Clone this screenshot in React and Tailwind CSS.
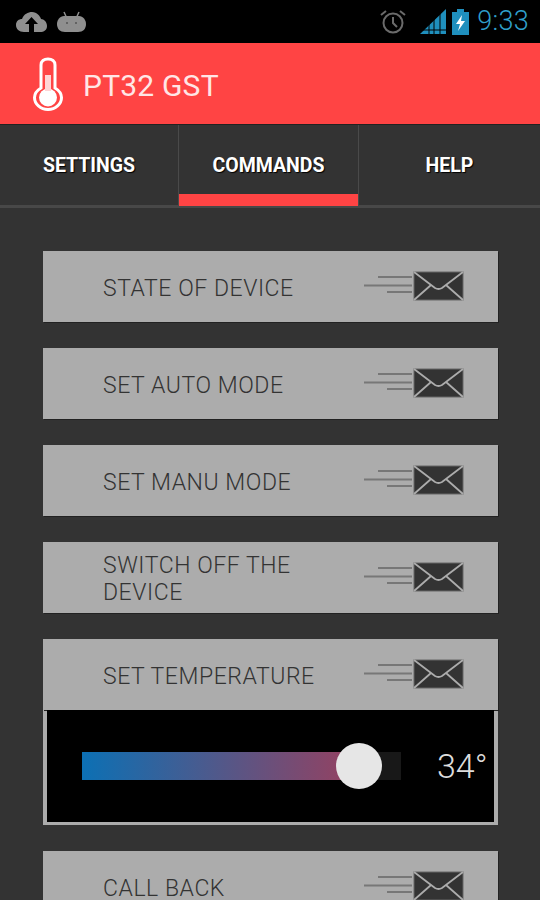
const COMMANDS = ['STATE OF DEVICE', 'SET AUTO MODE', 'SET MANU MODE', 'SWITCH OFF THE DEVICE'];

function SendIcon() {
  return (
    <svg width="100" height="32" viewBox="0 0 100 32" className="mb-[2px] shrink-0">
      <path d="M14 7H48M0 15.500H48M23 22H48" stroke="#777777" strokeWidth="1.800" fill="none" />
      <rect x="50" y="2" width="49" height="28" fill="#333333" stroke="#666666" />
      <path d="M50 2L71 18Q74.500 20 78 18L99 2M50 30L67 15M99 30L82 15" stroke="#acacac" strokeWidth="1.800" fill="none" />
    </svg>
  );
}

function CommandRow({ label }) {
  return (
    <div className="flex h-[71px] items-center bg-[#acacac] pl-[60px] pr-[34px] shadow-[1px_1px_0_#222222]">
      <div className="w-[261px] pt-[3px] text-[23px] font-light leading-[27px] tracking-[0.55px] text-[#333333]">{label}</div>
      <SendIcon />
    </div>
  );
}

function StatusBar() {
  return (
    <div className="flex h-[43px] items-center bg-black pl-[16px] pr-[11px]">
      <svg width="31" height="24" viewBox="0 0 31 24">
        <path d="M8 22C3 22 0 19 0 15C0 11 3 9 6 9C8 4 12 2 16 2C21 2 24 6 25 9C28 9 31 12 31 16C31 20 28 22 24 22H18V14H22L15.500 7L9 14H13V22Z" fill="#8f8f8f" />
      </svg>
      <svg width="31" height="24" viewBox="0 0 31 24" className="ml-[9px]">
        <path d="M8 2L10.500 7.500M23 2L20.500 7.500" stroke="#8f8f8f" strokeWidth="1.500" />
        <path d="M8 6H23C27 6 30 10 30 14C30 19 27 22 22 22H9C4 22 1 19 1 14C1 10 4 6 8 6Z" fill="#8f8f8f" />
        <circle cx="11" cy="13" r="1" fill="#555555" />
        <circle cx="20" cy="13" r="1" fill="#555555" />
      </svg>
      <div className="flex-1" />
      <svg width="28" height="26" viewBox="0 0 28 26">
        <circle cx="14" cy="14" r="9.500" fill="none" stroke="#6b6b6b" strokeWidth="2" />
        <path d="M14 8V14L18 18M2 6L7 2M26 6L21 2" fill="none" stroke="#6b6b6b" strokeWidth="2" />
      </svg>
      <svg width="27" height="26" viewBox="0 0 27 26" className="ml-[13px]">
        <path d="M0 25L26 0V25Z" fill="#1f8fbd" />
        <path d="M9 14V25M14 10V25M20 4V25M0 21H26" stroke="#000000" strokeWidth="1" />
      </svg>
      <svg width="17" height="26" viewBox="0 0 17 26" className="ml-[5px]">
        <path d="M5 0H12V3H17V26H0V3H5Z" fill="#1f8fbd" />
        <path d="M10 6L4 15H8L6 22L13 12H9Z" fill="#ffffff" />
      </svg>
      <span className="ml-[8px] text-[27px] font-light leading-none tracking-[0.3px] text-[#2f9fca]">9:33</span>
    </div>
  );
}

function TabItem({ label, active, border }) {
  return (
    <div className={`relative flex h-[80px] items-center justify-center pt-[2px] ${border ? 'border-x border-[#4a4a4a]' : ''}`}>
      <span className="text-[19.500px] font-bold text-white [text-shadow:1px_1px_1px_#000000]">{label}</span>
      {active && <div className="absolute inset-x-0 bottom-[-1px] z-10 h-[12px] bg-[#ff4444]" />}
    </div>
  );
}

export default function App() {
  return (
    <div className="h-[900px] w-[540px] overflow-hidden bg-[#333333] font-['Roboto',sans-serif]">
      <StatusBar />

      <div className="flex h-[82px] items-center border-b border-[#222222] bg-[#ff4444] pl-[33px]">
        <svg width="30" height="54" viewBox="0 0 30 54">
          <path d="M8 31V8C8 4 11 2 15 2C19 2 22 4 22 8V31C26 33.500 28.500 37 28.500 40.500C28.500 47 22.500 52.500 15 52.500C7.500 52.500 1.500 47 1.500 40.500C1.500 37 4 33.500 8 31Z" fill="none" stroke="#ffffff" strokeWidth="3" />
          <circle cx="15" cy="40.500" r="9" fill="#ffffff" />
          <rect x="12" y="18" width="6" height="16" fill="#ffd5d5" />
        </svg>
        <span className="ml-[20px] pt-[3px] text-[30px] tracking-[0.2px] text-[#ffe6e6]">PT32 GST</span>
      </div>

      <div className="grid grid-cols-[178px_181px_181px]">
        <TabItem label="SETTINGS" />
        <TabItem label="COMMANDS" active border />
        <TabItem label="HELP" />
      </div>
      <div className="h-[3px] bg-[#484848]" />

      <div className="flex flex-col gap-[26px] pl-[43px] pr-[42px] pt-[43px]">
        {COMMANDS.map(c => <CommandRow key={c} label={c} />)}

        <div className="bg-[#acacac] pb-[3px]">
          <CommandRow label="SET TEMPERATURE" />
          <div className="mx-[4px] flex h-[112px] items-center bg-black pl-[35px]">
            <div className="relative h-[28px] w-[319px] bg-[#181818]">
              <div className="h-full w-[277px] bg-[linear-gradient(90deg,#0c70b4,#98405f)]" />
              <div className="absolute left-[254px] top-[-9px] size-[46px] rounded-full bg-[#e6e6e6]" />
            </div>
            <span className="ml-[36px] text-[34px] font-light leading-none text-[#dddddd]">34°</span>
          </div>
        </div>

        <CommandRow label="CALL BACK" />
      </div>
    </div>
  );
}
